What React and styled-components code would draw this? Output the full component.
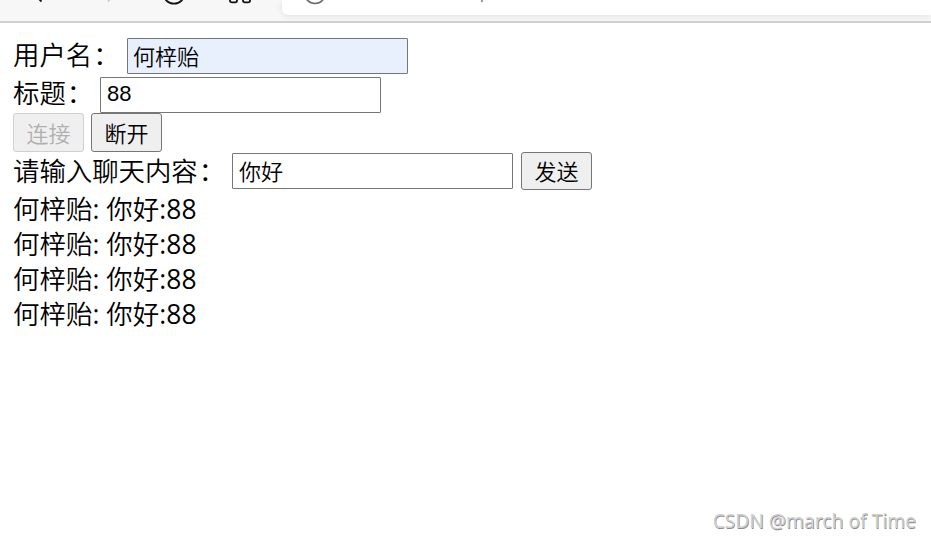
import React from "react";
import styled, { createGlobalStyle } from "styled-components";

const GlobalStyle = createGlobalStyle`
  * { box-sizing: border-box; }
  html, body { margin: 0; background: #fff; overflow: hidden; }
`;

const Page = styled.div`
  width: 931px;
  height: 540px;
  display: flex;
  flex-direction: column;
  background: #fff;
  color: #000;
  font: 26.4px/35px "Open Sans", "Noto Sans CJK SC DemiLight", "Noto Sans CJK SC", sans-serif;
`;

const BrowserBar = styled.header`
  flex: none;
  height: 23px;
  display: flex;
  background: #f7f7f7;
  border-bottom: 2px solid #d0d0d0;
  overflow: hidden;
`;

const NavIcons = styled.svg`
  flex: none;
  width: 282px;
  height: 21px;
  fill: none;
  stroke: #111;
  stroke-width: 1.8;
`;

const AddressBar = styled.div`
  flex: 1;
  height: 15px;
  background: #fff;
  border-bottom-left-radius: 6px;
  box-shadow: 0 1px 7px rgba(0, 0, 0, 0.09);
`;

const AddressIcons = styled.svg`
  display: block;
  width: 240px;
  height: 15px;
  fill: none;
`;

const Content = styled.main`
  flex: 1;
  padding: 15px 13px 0;
`;

const Row = styled.div`
  display: flex;
  align-items: center;
  height: ${(p) => p.$height}px;
  margin-top: ${(p) => p.$gap || 0}px;
`;

const Label = styled.label`
  flex: none;
  width: ${(p) => p.$width}px;
  height: 35px;
  margin-top: ${(p) => p.$shift}px;
  white-space: nowrap;
`;

const Colon = styled.span`
  margin-left: 1px;
`;

const Input = styled.input`
  width: 281px;
  height: 36px;
  padding: 0 6px 3px 5px;
  border: 1px solid #767676;
  border-radius: 1px;
  outline: none;
  background: ${(p) => (p.$autofilled ? "#e8f0fe" : "#fff")};
  color: #000;
  font: 22px "Liberation Sans", "Noto Sans CJK SC DemiLight", "Noto Sans CJK SC", sans-serif;
`;

const PlainInput = styled(Input)`
  padding: 0 6px 2px;
`;

const Button = styled.button`
  width: 71px;
  height: 39px;
  padding: 0 0 2px;
  margin-right: 7px;
  border: 1px solid #767676;
  border-radius: 3px;
  background: #efefef;
  color: #000;
  font: 22px "Liberation Sans", "Noto Sans CJK SC DemiLight", "Noto Sans CJK SC", sans-serif;

  &:disabled {
    border-color: #d0d0d0;
    color: #b0b0b0;
  }
`;

const SendButton = styled(Button)`
  height: 38px;
  margin: 0 0 0 8px;
`;

const Messages = styled.div`
  padding-top: 2px;
  letter-spacing: 0.07px;
`;

const Message = styled.div`
  height: 35px;
`;

const Watermark = styled.footer`
  flex: none;
  height: 36px;
  padding-right: 15px;
  text-align: right;
  color: #d0d0d0;
  font: 19.2px/34px "Noto Sans", sans-serif;
  text-shadow: 0.6px 0.6px 0 #8c8c8c;
`;

const messages = ["何梓贻: 你好:88", "何梓贻: 你好:88", "何梓贻: 你好:88", "何梓贻: 你好:88"];

export default function App() {
  return (
    <Page>
      <GlobalStyle />
      <BrowserBar>
        <NavIcons viewBox="0 0 282 21">
          <path d="M33-7 L41.5 1.5" />
          <path d="M116-7 L108 1.5" stroke="#c8c8c8" />
          <circle cx="174" cy="-7" r="10.7" />
          <path d="M230-4 V.5 Q230 2.4 232 2.4 H235 Q237 2.4 237 .5 V-4 M243-4 V.5 Q243 2.4 245 2.4 H248 Q250 2.4 250 .5 V-4" />
        </NavIcons>
        <AddressBar>
          <AddressIcons viewBox="0 0 240 15">
            <circle cx="33" cy="-7" r="10.5" stroke="#666" strokeWidth="1.5" />
            <path d="M201-3 L199.6 2" stroke="#667" strokeWidth="1.3" />
          </AddressIcons>
        </AddressBar>
      </BrowserBar>
      <Content>
        <Row $height={36}>
          <Label $width={114} $shift={-1} htmlFor="username">用户名<Colon>：</Colon></Label>
          <Input id="username" $autofilled defaultValue="何梓贻" />
        </Row>
        <Row $height={36} $gap={3}>
          <Label $width={87} $shift={-3} htmlFor="title">标题<Colon>：</Colon></Label>
          <PlainInput id="title" defaultValue="88" />
        </Row>
        <Row $height={39}>
          <Button disabled>连接</Button>
          <Button>断开</Button>
        </Row>
        <Row $height={38}>
          <Label $width={219} $shift={0} htmlFor="message">请输入聊天内容<Colon>：</Colon></Label>
          <PlainInput id="message" defaultValue="你好" />
          <SendButton>发送</SendButton>
        </Row>
        <Messages>
          {messages.map((text, i) => (
            <Message key={i}>{text}</Message>
          ))}
        </Messages>
      </Content>
      <Watermark>CSDN @march of Time</Watermark>
    </Page>
  );
}
